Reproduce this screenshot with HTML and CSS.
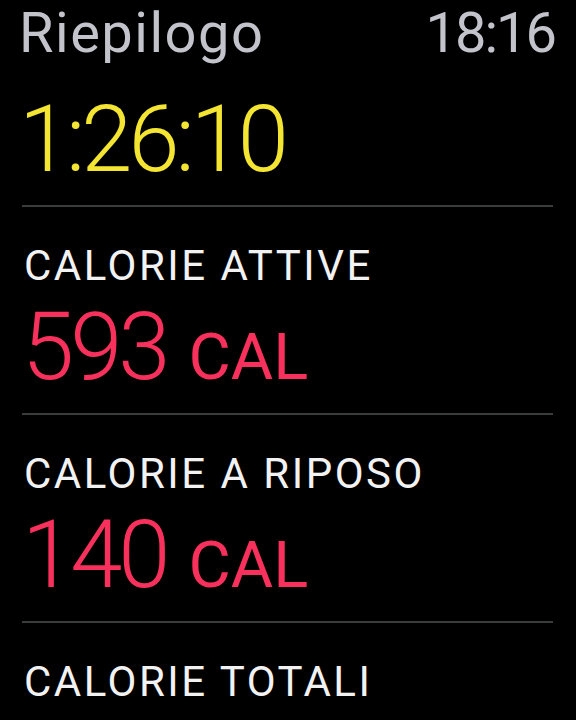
FILE: index.html
```html
<!DOCTYPE html>
<html>
<head>
<meta charset="utf-8"/>
<title>Riepilogo</title>
<link rel="stylesheet" href="styles.css">
</head>
<body>
<div class="screen">
  <div class="header">
    <span class="title">Riepilogo</span>
    <span class="clock">18:16</span>
  </div>

  <div class="duration">1:26:10</div>

  <div class="row">
    <div class="label">CALORIE ATTIVE</div>
    <div class="value"><span class="num">593</span><span class="unit">CAL</span></div>
  </div>

  <div class="row">
    <div class="label">CALORIE A RIPOSO</div>
    <div class="value"><span class="num">140</span><span class="unit">CAL</span></div>
  </div>

  <div class="row">
    <div class="label">CALORIE TOTALI</div>
  </div>
</div>
</body>
</html>
```

FILE: styles.css
```css
body {
   margin: 0;
   background-color: black;
   font-family: Roboto, "Noto Sans", sans-serif;
}

.screen {
   width: 576px;
   height: 720px;
   overflow: hidden;
   padding: 0 21px 0 22px;
   box-sizing: border-box;
}

.header {
   display: flex;
   justify-content: space-between;
   padding-top: 3px;
   height: 60px;
   font-size: 56px;
   line-height: 60px;
   color: #c3c3cb;
}

.title {
   margin-left: -3px;
   letter-spacing: 1.5px;
}

.clock {
   letter-spacing: -2px;
}

.duration {
   margin-top: 27px;
   margin-left: -3px;
   height: 100px;
   font-size: 92px;
   line-height: 100px;
   font-weight: 300;
   color: #f4e532;
   letter-spacing: -4px;
   margin-bottom: 15px;
}

.row {
   border-top: 2px solid #3a3d3e;
   padding: 35px 0 18px;
   margin-right: 2px;
}

.label {
   font-size: 42px;
   line-height: 48px;
   color: #f2f2f2;
   letter-spacing: 2.5px;
   margin-left: 2px;
}

.value {
   margin-top: 9px;
   height: 96px;
   line-height: 96px;
   color: #f7305c;
}

.num {
   font-size: 94px;
   font-weight: 300;
   letter-spacing: -4px;
}

.unit {
   font-size: 65px;
   margin-left: 22px;
}
```
